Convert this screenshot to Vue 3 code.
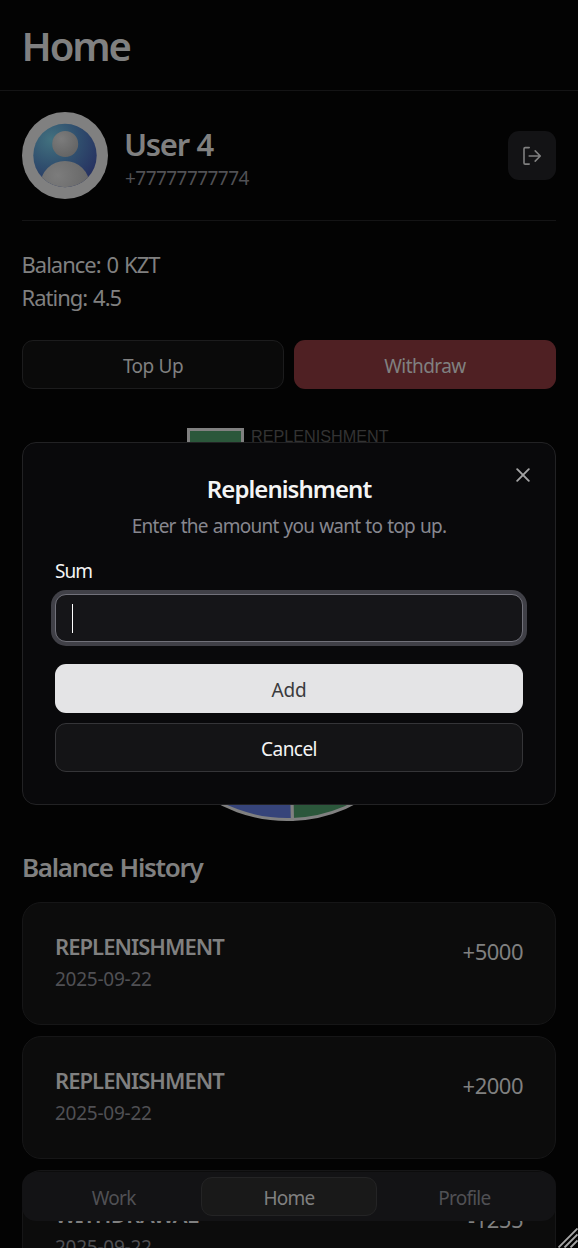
<script setup>
const history = [
  { type: 'REPLENISHMENT', kind: 'in', date: '2025-09-22', amount: '+5000' },
  { type: 'REPLENISHMENT', kind: 'in', date: '2025-09-22', amount: '+2000' },
  { type: 'WITHDRAWAL', kind: 'out', date: '2025-09-22', amount: '-1255' },
]
</script>

<template>
  <div class="screen">
    <header class="header"><h1>Home</h1></header>

    <main class="main">
      <section class="profile">
        <svg class="avatar" viewBox="0 0 86 87">
          <defs>
            <radialGradient id="sky" cx="0.28" cy="0.25" r="0.85">
              <stop offset="0" stop-color="#42717f" />
              <stop offset="0.5" stop-color="#304f6e" />
              <stop offset="1" stop-color="#263060" />
            </radialGradient>
            <radialGradient id="skin" cx="0.35" cy="0.3" r="0.8">
              <stop offset="0" stop-color="#7c7c7c" />
              <stop offset="1" stop-color="#626262" />
            </radialGradient>
            <clipPath id="disc"><circle cx="43" cy="43.5" r="31.7" /></clipPath>
          </defs>
          <ellipse cx="43" cy="43.5" rx="43" ry="43.5" fill="#808080" />
          <circle cx="43" cy="43.5" r="31.7" fill="url(#sky)" />
          <g clip-path="url(#disc)">
            <circle cx="43.2" cy="32" r="13" fill="url(#skin)" />
            <ellipse cx="43" cy="73" rx="24.5" ry="24" fill="url(#skin)" />
          </g>
        </svg>
        <div class="who">
          <div class="name">User 4</div>
          <div class="phone">+77777777774</div>
        </div>
        <button class="logout" aria-label="Log out">
          <svg width="24" height="24" viewBox="0 0 24 24" fill="none" stroke="#808080" stroke-width="1.6" stroke-linecap="round" stroke-linejoin="round">
            <path d="M9.2 3.6H5.2Q4 3.6 4 4.8V18.9Q4 20.1 5.2 20.1H9.2M9.2 12H20.2M15.2 6.9L20.3 12L15.2 17.1" />
          </svg>
        </button>
      </section>

      <section class="stats">
        <div class="balance">Balance: 0 KZT</div>
        <div class="rating">Rating: 4.5</div>
      </section>

      <section class="actions">
        <button class="topup"><span>Top Up</span></button>
        <button class="withdraw"><span>Withdraw</span></button>
      </section>

      <section class="chart">
        <div class="legend"><i class="swatch"></i><span>REPLENISHMENT</span></div>
        <svg class="pie" width="534" height="366" viewBox="0 0 534 366">
          <g stroke="#808080" stroke-width="3">
            <path fill="#2b573b" d="M266.7 216V69.5A146.5 146.5 0 0 1 270.3 362.4Z" />
            <path fill="#36447a" d="M266.7 216L270.3 362.4A146.5 146.5 0 1 1 266.7 69.5Z" />
          </g>
        </svg>
      </section>

      <h2>Balance History</h2>
      <div class="list">
        <article v-for="(item, i) in history" :key="i" class="card">
          <div>
            <div class="type" :class="item.kind">{{ item.type }}</div>
            <div class="date">{{ item.date }}</div>
          </div>
          <div class="amount">{{ item.amount }}</div>
        </article>
      </div>
    </main>

    <nav class="tabs">
      <div class="tab"><span>Work</span></div>
      <div class="tab active"><span>Home</span></div>
      <div class="tab"><span>Profile</span></div>
    </nav>

    <div class="overlay">
      <div class="dialog">
        <svg class="close" width="14" height="14" viewBox="0 0 14 14" fill="none" stroke="#a4a4a5" stroke-width="1.9" stroke-linecap="round">
          <path d="M1.2 1.2L12.8 12.8M12.8 1.2L1.2 12.8" />
        </svg>
        <h3>Replenishment</h3>
        <p>Enter the amount you want to top up.</p>
        <label>Sum</label>
        <div class="field"><i class="caret"></i></div>
        <button class="add"><span>Add</span></button>
        <button class="cancel"><span>Cancel</span></button>
      </div>
    </div>

    <svg class="grip" width="20" height="20" viewBox="0 0 20 20" stroke="#a6a6a6" stroke-width="1.9">
      <path d="M0.5 19.5L19.5 0.5M6.5 19.5L19.5 6.5M12.5 19.5L19.5 12.5" />
    </svg>
  </div>
</template>

<style>
body { background: #030303; overflow: hidden; }
</style>

<style scoped>
* { box-sizing: border-box; }
.screen {
  position: relative;
  width: 578px;
  height: 1248px;
  overflow: hidden;
  background: #030303;
  color: #808080;
  font-family: "Noto Sans", "Open Sans", sans-serif;
  font-size: 19px;
}
h1, h2, h3, p { margin: 0; }
button {
  font: inherit;
  color: inherit;
  letter-spacing: -0.55px;
  padding: 2px 0 0;
  border: 1px solid transparent;
  display: flex;
  align-items: center;
  justify-content: center;
}
.header { height: 91px; padding: 18px 22px 0; border-bottom: 1px solid #141415; }
h1 { margin-left: -0.5px; font-size: 40px; line-height: 56px; font-weight: 600; letter-spacing: -2.1px; }
.main { padding: 21px 22px 0; }
.profile { display: flex; height: 109px; border-bottom: 1px solid #141415; }
.avatar { width: 86px; height: 87px; flex: none; }
.who { margin-left: 16px; flex: 1; padding-top: 11px; }
.name { font-size: 31px; line-height: 42px; font-weight: 600; letter-spacing: -1.3px; word-spacing: 1px; }
.phone { margin-left: 1px; line-height: 26px; color: #515155; letter-spacing: -0.55px; }
.logout { width: 48px; height: 49px; margin-top: 19px; padding: 0; border-radius: 11px; background: #131315; }
.stats { padding-top: 27px; height: 95px; font-size: 22px; line-height: 33px; white-space: nowrap; letter-spacing: -1px; word-spacing: 1.2px; }
.balance, .rating { margin-left: -0.5px; }
.actions { display: flex; gap: 10px; margin-top: 24px; }
.actions button { flex: 1; height: 49px; border-radius: 11px; word-spacing: 0.5px; }
.topup { background: #0a0a0a; border-color: #1c1c1d; }
.withdraw { background: #4f2023; }
.chart { height: 434px; padding-top: 39px; }
.legend { display: flex; gap: 7px; padding-left: 165px; height: 29px; font: 16.2px/16px "Liberation Sans", Arial, sans-serif; color: #333; }
.swatch { width: 57px; height: 18px; border: 3px solid #808080; background: #2b573b; }
.pie { display: block; }
h2 { font-size: 26px; line-height: 36px; font-weight: 600; margin-top: 26px; letter-spacing: -1.3px; word-spacing: 1.5px; }
.list { display: flex; flex-direction: column; gap: 11px; margin-top: 17px; }
.card {
  display: flex;
  justify-content: space-between;
  height: 123px;
  padding: 27px 32px 0;
  border: 1px solid #161617;
  border-radius: 19px;
  background: #0c0c0c;
}
.type { font-size: 22px; line-height: 32px; font-weight: 600; letter-spacing: -0.95px; }
.type.out { letter-spacing: -0.6px; }
.date { line-height: 33px; margin-top: 1px; color: #505054; letter-spacing: -0.25px; }
.amount { font-size: 22px; line-height: 32px; padding-top: 5px; letter-spacing: -0.5px; }
.tabs {
  position: absolute;
  left: 22px;
  top: 1172px;
  width: 534px;
  height: 49px;
  padding: 5px 4px;
  display: flex;
  border-radius: 14px;
  background: #131315;
  color: #505054;
  letter-spacing: -0.75px;
}
.tab { flex: 1; height: 39px; display: flex; align-items: center; justify-content: center; padding-top: 3px; border: 1px solid transparent; border-radius: 11px; }
.tab.active { background: #191919; border-color: #242425; color: #808080; }
.overlay { position: absolute; inset: 0; display: flex; align-items: center; justify-content: center; }
.dialog {
  position: relative;
  width: 534px;
  height: 363px;
  margin-top: -1px;
  padding: 31px 32px;
  border: 1px solid #222224;
  border-radius: 14px;
  background: #09090b;
  color: #f4f4f4;
  display: flex;
  flex-direction: column;
}
.close { position: absolute; right: 25px; top: 25px; }
h3 { text-align: center; font-size: 24px; line-height: 30px; font-weight: 600; letter-spacing: -0.95px; }
p { text-align: center; line-height: 28px; margin-top: 8px; color: #87878f; letter-spacing: -0.75px; word-spacing: 0.8px; }
label { line-height: 26px; margin-top: 18px; letter-spacing: -1px; }
.field {
  height: 48px;
  margin-top: 10px;
  padding: 9px 16px;
  border: 1px solid #71717a;
  border-radius: 11px;
  background: #151518;
  box-shadow: 0 0 0 4px #404047;
}
.caret { display: block; width: 1px; height: 29px; background: #fff; }
.add, .cancel { flex: none; height: 49px; border-radius: 11px; }
.add { margin-top: 22px; background: #e4e4e6; color: #3a3a3d; letter-spacing: -0.2px; }
.cancel { margin-top: 10px; background: #141416; border-color: #353538; }
.grip { position: absolute; right: 0; bottom: 0; }
</style>
